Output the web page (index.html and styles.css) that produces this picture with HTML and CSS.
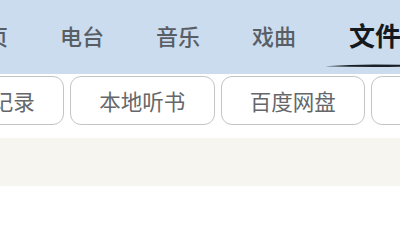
FILE: index.html
```html
<!DOCTYPE html>
<html lang="zh">
<head>
<meta charset="utf-8">
<link rel="stylesheet" href="styles.css">
</head>
<body>
<div class="page">
  <header class="tabs">
    <span class="tab">首页</span>
    <span class="tab">电台</span>
    <span class="tab">音乐</span>
    <span class="tab">戏曲</span>
    <span class="tab active">文件
      <svg class="stroke" viewBox="0 0 100 5" width="100" height="5" aria-hidden="true">
        <path d="M0 3.2 Q50 -0.4 100 3.2 Q50 4.6 0 3.2Z" fill="#1a1f26"/>
      </svg>
    </span>
  </header>
  <nav class="chips">
    <span class="chip">播放记录</span>
    <span class="chip">本地听书</span>
    <span class="chip">百度网盘</span>
    <span class="chip">我的下载</span>
  </nav>
  <section class="band"></section>
</div>
</body>
</html>
```

FILE: styles.css
```css
html, body {
  margin: 0;
  padding: 0;
  background: #ffffff;
}
.page {
  width: 400px;
  height: 230px;
  overflow: hidden;
  font-family: "Noto Sans CJK SC", "Noto Sans", sans-serif;
}
.tabs {
  height: 74px;
  background: #cadcee;
  display: flex;
  align-items: center;
  gap: 52px;
  padding-left: 36px;
  margin-left: -72px;
  white-space: nowrap;
  padding-bottom: 4px;
  box-sizing: border-box;
}
.tab {
  font-size: 22px;
  line-height: 1;
  color: #595e65;
  font-weight: 500;
  flex: none;
  position: relative;
}
.tab.active {
  font-size: 26px;
  font-weight: 700;
  color: #15181c;
  margin-left: 1px;
}
.stroke {
  position: absolute;
  left: -24px;
  top: 41px;
  display: block;
}
.chips {
  display: flex;
  gap: 6px;
  margin-top: 2px;
  margin-left: -80.5px;
  white-space: nowrap;
}
.chip {
  flex: none;
  width: 144.5px;
  height: 49px;
  box-sizing: border-box;
  border: 1.5px solid #c4c4c6;
  border-radius: 11px;
  display: flex;
  align-items: center;
  justify-content: center;
  font-size: 21.5px;
  color: #65676b;
}
.band {
  margin-top: 13px;
  height: 48px;
  background: #f6f5ef;
}
```
